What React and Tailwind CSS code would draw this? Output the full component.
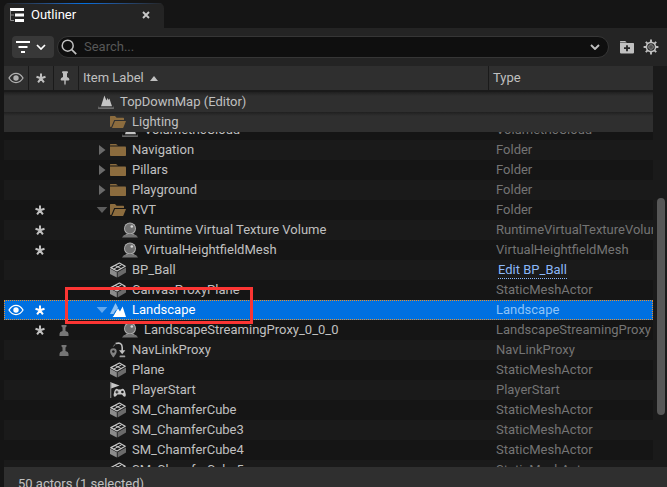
const ROWS = [
  { name: 'Navigation', type: 'Folder', icon: 'folder', expander: 'closed' },
  { name: 'Pillars', type: 'Folder', icon: 'folder', expander: 'closed' },
  { name: 'Playground', type: 'Folder', icon: 'folder', expander: 'closed' },
  { name: 'RVT', type: 'Folder', icon: 'folderOpen', expander: 'open', unsaved: true },
  { name: 'Runtime Virtual Texture Volume', type: 'RuntimeVirtualTextureVolume', icon: 'actor', depth: 2, unsaved: true },
  { name: 'VirtualHeightfieldMesh', type: 'VirtualHeightfieldMesh', icon: 'actor', depth: 2, unsaved: true },
  { name: 'BP_Ball', type: 'Edit BP_Ball', icon: 'mesh', link: true },
  { name: 'CanvasProxyPlane', type: 'StaticMeshActor', icon: 'mesh' },
  { name: 'Landscape', type: 'Landscape', icon: 'landscape', expander: 'open', unsaved: true, selected: true },
  { name: 'LandscapeStreamingProxy_0_0_0', type: 'LandscapeStreamingProxy', icon: 'actor', depth: 2, unsaved: true, pinned: true },
  { name: 'NavLinkProxy', type: 'NavLinkProxy', icon: 'navLink', pinned: true },
  { name: 'Plane', type: 'StaticMeshActor', icon: 'mesh' },
  { name: 'PlayerStart', type: 'PlayerStart', icon: 'player' },
  { name: 'SM_ChamferCube', type: 'StaticMeshActor', icon: 'mesh' },
  { name: 'SM_ChamferCube3', type: 'StaticMeshActor', icon: 'mesh' },
  { name: 'SM_ChamferCube4', type: 'StaticMeshActor', icon: 'mesh' },
  { name: 'SM_ChamferCube5', type: 'StaticMeshActor', icon: 'mesh' },
];

const INDENT = ['pl-[7px]', 'pl-[19px]', 'pl-[31px]'];

function Svg({ children, className = 'size-4' }) {
  return (
    <svg viewBox="0 0 16 16" className={`shrink-0 ${className}`} fill="none" aria-hidden="true">
      {children}
    </svg>
  );
}

const ICONS = {
  folder: (
    <g fill="#8c6c3e">
      <path d="M0 2.6Q0 2 .6 2H6l2 1.6H0z" />
      <path d="M0 4.6h15.2q.8 0 .8.8v7.8q0 .8-.8.8H.8q-.8 0-.8-.8z" />
    </g>
  ),
  folderOpen: (
    <g fill="#8c6c3e">
      <path d="M0 2.6Q0 2 .6 2H5l1.600 1.800h6.800q.6 0 .6.600V6H4.200L1.200 13H.8q-.8 0-.8-.8z" />
      <path d="M5 7h11l-2.600 6.400q-.3.600-.9.600H2z" />
    </g>
  ),
  actor: (
    <>
      <path d="M2 13h12l2 2.600H0z" fill="#727272" />
      <circle cx="8" cy="6.500" r="6" fill="#b0b0b0" />
      <circle cx="8" cy="6.500" r="5" fill="#707070" />
      <circle cx="9.800" cy="4.500" r="1.300" fill="#d8d8d8" />
      <path d="M4.200 11.600q3.800 2 7.600 0l1 1.400H3.200z" fill="#8a8a8a" />
    </>
  ),
  mesh: (
    <>
      <path d="M0 6.600l6.800 3.600v5.400L0 12z" fill="#8c8c8c" />
      <path d="M7.600 10.200L16 5.400v5.200l-8.400 5z" fill="#6a6a6a" />
      <path d="M.8 5.600L9.400 1l5.800 3.200L7 9z" fill="#1a1a1a" stroke="#c8c8c8" strokeWidth="1.200" strokeLinejoin="round" />
      <path d="M5 3.400l6.200 3.200M3.600 7.200l8-4.400" stroke="#c8c8c8" strokeWidth="1" />
    </>
  ),
  landscape: (
    <>
      <path d="M0 12L5.500 1 8 5.800 4.400 12z" fill="#8cc0f4" />
      <path d="M2.600 15L8 6.400l2 3 2.600-5L16 15z" fill="#fff" />
      <path d="M2.600 14.600l3.400-6.200" stroke="#0070e0" />
    </>
  ),
  world: (
    <>
      <path d="M3 12.200L6.400 1.400l2 5 1.200-2.400 1 2 .8-1.600L14 12.200z" fill="#c4c4c4" />
      <path d="M.8 11.400L0 14.800h16l-.8-3.400v2H.8z" fill="#828282" />
    </>
  ),
  navLink: (
    <>
      <path d="M3.400 6.200a3.300 3.300 0 0 1 3.300 3.300c0 2.300-3.300 6-3.300 6S.1 11.800.1 9.500a3.300 3.300 0 0 1 3.300-3.300z" fill="#828282" />
      <circle cx="3.400" cy="9.500" r="1.300" fill="#1a1a1a" />
      <path d="M5.600 1.600q6.600-2 6.600 4v3.600" stroke="#c0c0c0" strokeWidth="1.600" />
      <path d="M9 8.200h6.400l-3.200 4z" fill="#c0c0c0" />
      <path d="M10.400 14.400h4" stroke="#a0a0a0" strokeWidth="1.800" strokeLinecap="round" />
      <path d="M3.400 4.500l1.800-2.300" stroke="#828282" />
    </>
  ),
  player: (
    <>
      <path d="M.7 0v16" stroke="#828282" strokeWidth="1.200" />
      <path d="M1.200.600L9.600 3.600 1.200 6.600z" fill="#c8c8c8" />
      <path d="M5.800 7q1.400-.8 2.400.400h2.800Q12 6.200 13.600 7q1.600 1.200 2.200 5.600.2 2.200-1.200 2.200-1 0-2.600-2.400H7.400q-1.600 2.400-2.600 2.400-1.400 0-1.200-2.200Q4.200 8.200 5.800 7z" fill="#c8c8c8" />
      <path d="M6.900 8.600v3M5.400 10.100h3" stroke="#1a1a1a" strokeWidth="1" />
      <circle cx="12.400" cy="10" r="1.300" fill="#1a1a1a" />
    </>
  ),
};

function Asterisk() {
  return (
    <Svg>
      <path d="M8 8.300V3.400M8 8.300l4.500-1.500M8 8.300l2.900 4M8 8.300l-2.900 4M8 8.300L3.500 6.800" stroke="currentColor" strokeWidth="2" />
    </Svg>
  );
}

function Eye({ className }) {
  return (
    <Svg className={`size-4 ${className}`}>
      <path d="M1 8q2.800-4.600 7-4.600T15 8q-2.800 4.600-7 4.600T1 8z" stroke="currentColor" strokeWidth="1.300" />
      <circle cx="8" cy="8" r="2.700" fill="currentColor" />
    </Svg>
  );
}

function Expander({ state }) {
  return (
    <span className="flex w-3 shrink-0 items-center">
      {state === 'closed' && (
        <svg viewBox="0 0 12 12" className="size-3" aria-hidden="true">
          <path d="M1 1v10L7.500 6z" fill="#6a6a6a" />
        </svg>
      )}
      {state === 'open' && (
        <svg viewBox="0 0 12 12" className="-ml-0.5 size-3" aria-hidden="true">
          <path d="M.7 3h10.600L6 9z" fill="currentColor" />
        </svg>
      )}
    </span>
  );
}

function NameCell({ icon, name, depth = 1, expander, selected }) {
  return (
    <div className={`flex h-5 items-center overflow-hidden whitespace-nowrap ${INDENT[depth]}`}>
      <span className={`flex ${selected ? 'text-[#62a8ee]' : 'text-[#5c5c5c]'}`}>
        <Expander state={expander} />
      </span>
      <Svg>{ICONS[icon]}</Svg>
      <span className="pl-1.5">{name}</span>
    </div>
  );
}

function Row({ row, dark }) {
  const tone = row.selected
    ? 'bg-[#0070e0] text-white outline-1 -outline-offset-1 outline-dotted outline-[#e8912d]'
    : dark
      ? 'bg-[#151515]'
      : 'bg-[#1a1a1a]';
  return (
    <tr className={tone} aria-selected={row.selected}>
      <td className="pl-1">{row.selected && <Eye className="text-white" />}</td>
      <td className="pl-[3px]">{row.unsaved && <Asterisk />}</td>
      <td className="pl-0.5">
        {row.pinned && (
          <Svg>
            <path d="M5.500 3h5v1.400l-1 1V9q3 .8 3 2.800v2.200h-9v-2.200Q3.500 9.800 6.500 9V5.400l-1-1z" fill="#767676" />
          </Svg>
        )}
      </td>
      <td>
        <NameCell {...row} />
      </td>
      <td className={row.selected ? 'text-[#8cc4fa]' : 'text-[#747474]'}>
        <div className="flex h-5 items-center overflow-hidden pl-[7px] whitespace-nowrap">
          {row.link ? (
            <a href="#bp-ball" className="ml-0.5 border-b border-dotted border-[#8cb8f8] leading-4 text-[#8cb8f8]">
              {row.type}
            </a>
          ) : (
            row.type
          )}
        </div>
      </td>
    </tr>
  );
}

function PinnedRow(props) {
  return (
    <tr className="bg-linear-to-b from-[#202020] to-[#2f2f2f] to-20%">
      <td colSpan={3} />
      <td>
        <NameCell {...props} />
      </td>
      <td />
    </tr>
  );
}

function HeaderCell({ children, className = '' }) {
  return (
    <th scope="col" className={`h-[26px] border-b-2 border-[#1a1a1a] bg-[#2f2f2f] font-normal ${className}`}>
      {children}
    </th>
  );
}

function ActorTable() {
  return (
    <table className="w-full table-fixed border-separate border-spacing-0 text-left">
      <colgroup>
        <col className="w-[25px]" />
        <col className="w-[25px]" />
        <col className="w-[25px]" />
        <col />
        <col className="w-[164px]" />
      </colgroup>
      <thead>
        <tr>
          <HeaderCell className="border-r pl-1">
            <Eye className="text-[#b0b0b0]" />
          </HeaderCell>
          <HeaderCell className="border-r pl-1">
            <Asterisk />
          </HeaderCell>
          <HeaderCell className="border-r pl-[3px]">
            <Svg>
              <path d="M6 1.200h4q1 0 1 1t-1 1.200V7q2.400.6 2.400 2.600 0 .8-.8.800H4.400q-.8 0-.8-.8Q3.600 7.600 6 7V3.400q-1-.2-1-1.200t1-1zM7.300 10h1.400v3.500L8 15.500l-.7-2z" fill="#c0c0c0" />
            </Svg>
          </HeaderCell>
          <HeaderCell className="border-r">
            <button type="button" className="flex items-center gap-1.5 pl-1">
              Item Label
              <svg viewBox="0 0 8 5" className="h-[5px] w-2" aria-hidden="true">
                <path d="M0 5L4 0l4 5z" fill="#c0c0c0" />
              </svg>
            </button>
          </HeaderCell>
          <HeaderCell>
            <button type="button" className="block pl-1">Type</button>
          </HeaderCell>
        </tr>
      </thead>
      <tbody>
        <PinnedRow name="TopDownMap (Editor)" icon="world" depth={0} />
        <PinnedRow name="Lighting" icon="folderOpen" depth={1} />
        <tr className="bg-[#151515]">
          <td colSpan={3} />
          <td>
            <div className="flex h-2 items-end overflow-hidden">
              <NameCell name="VolumetricCloud" icon="world" depth={2} />
            </div>
          </td>
          <td className="text-[#747474]">
            <div className="flex h-2 items-end overflow-hidden pl-[7px]">
              <span className="h-5 leading-5">VolumetricCloud</span>
            </div>
          </td>
        </tr>
        {ROWS.map((row, i) => (
          <Row key={row.name} row={row} dark={i % 2 === 1} />
        ))}
      </tbody>
    </table>
  );
}

function Toolbar() {
  return (
    <div className="flex h-[38px] shrink-0 items-center bg-[#242424] px-2">
      <button type="button" aria-label="Filters" className="flex h-[22px] w-[42px] shrink-0 items-center gap-1.5 rounded-[4px] bg-[#383838] pl-1 text-white">
        <svg viewBox="0 0 14 12" className="h-3 w-3.5" aria-hidden="true">
          <path d="M0 1h14M2.500 6h9M5 11h4" stroke="currentColor" strokeWidth="1.800" />
        </svg>
        <svg viewBox="0 0 10 6" className="h-1.5 w-2.5" fill="none" aria-hidden="true">
          <path d="M1 1l4 4 4-4" stroke="currentColor" strokeWidth="1.700" />
        </svg>
      </button>
      <label className="ml-[3px] flex h-[22px] min-w-0 flex-1 items-center rounded-full border border-[#363636] bg-[#0f0f0f] pr-2 pl-[3px]">
        <Svg>
          <circle cx="6.700" cy="6.700" r="5.500" stroke="#c0c0c0" strokeWidth="1.500" />
          <path d="M10.700 10.700l4.500 4.500" stroke="#c0c0c0" strokeWidth="1.700" />
        </Svg>
        <input
          type="text"
          aria-label="Search"
          placeholder="Search..."
          className="ml-[7px] min-w-0 flex-1 bg-transparent outline-none placeholder:text-[#575757]"
        />
        <svg viewBox="0 0 10 6" className="h-1.5 w-2.5" fill="none" aria-hidden="true">
          <path d="M1 1l4 4 4-4" stroke="#c0c0c0" strokeWidth="1.900" />
        </svg>
      </label>
      <button type="button" aria-label="New folder" className="ml-[10px]">
        <Svg>
          <path d="M1 2.600q0-.6.600-.6h4.600l1.600 1.400H1z" fill="#c0c0c0" />
          <path d="M1 4h13.400q.6 0 .6.600v9q0 .8-.8.800H1.800q-.8 0-.8-.8z" fill="#c0c0c0" />
          <path d="M8 6.200v6M5 9.200h6" stroke="#242424" strokeWidth="1.800" />
        </Svg>
      </button>
      <button type="button" aria-label="Settings" className="ml-2">
        <Svg>
          <path d="M8 .6v14.800M.6 8h14.800M2.800 2.800l10.400 10.400M13.200 2.800L2.800 13.200" stroke="#c0c0c0" strokeWidth="1.900" />
          <circle cx="8" cy="8" r="4.600" fill="#242424" stroke="#c0c0c0" strokeWidth="1.600" />
          <circle cx="8" cy="8" r="2.400" fill="#4c4c4c" stroke="#808080" strokeWidth="1" />
        </Svg>
      </button>
    </div>
  );
}

export default function App() {
  return (
    <main className="flex h-screen flex-col overflow-hidden bg-[#151515] pl-1 font-[Roboto,sans-serif] text-[13px] leading-5 text-[#c0c0c0]">
      <div className="flex h-7 shrink-0 pt-[3px]">
        <div className="flex w-40 flex-col overflow-hidden rounded-t-[5px] bg-[#242424]">
          <div className="h-px bg-linear-to-r from-[#242424] via-[#0070e0] to-[#242424]" />
          <div className="flex flex-1 items-center pr-3 pb-0.5 pl-1.5 text-white">
            <svg viewBox="0 0 14 14" className="h-3.5 w-3.5 shrink-0" fill="none" aria-hidden="true">
              <path d="M0 1.500h14M5 7h9M5 12.500h9" stroke="#fff" strokeWidth="2.800" />
              <path d="M.5 2.500v10H4M.5 7H4" stroke="#8a8a8a" />
            </svg>
            <span className="flex-1 pl-[7px]">Outliner</span>
            <button type="button" aria-label="Close tab" className="flex size-3 items-center justify-center">
              <svg viewBox="0 0 8 8" className="size-2" aria-hidden="true">
                <path d="M1 1l6 6M7 1L1 7" stroke="#c8c8c8" strokeWidth="1.900" />
              </svg>
            </button>
          </div>
        </div>
      </div>
      <Toolbar />
      <div className="flex min-h-0 flex-1 overflow-hidden bg-[#1a1a1a]">
        <div className="relative min-w-0 flex-1">
          <ActorTable />
          <div className="pointer-events-none absolute top-[221px] left-[61px] h-[37px] w-[188px] border-3 border-[#fb3533]" />
        </div>
        <div className="flex w-3.5 shrink-0 flex-col pt-[132px] pr-0.5 pb-[52px] pl-1">
          <div className="flex-1 rounded-full bg-[#575757]" />
        </div>
      </div>
      <footer className="h-5 shrink-0 overflow-hidden bg-[#2f2f2f] pt-[7px] pl-3.5">50 actors (1 selected)</footer>
    </main>
  );
}
